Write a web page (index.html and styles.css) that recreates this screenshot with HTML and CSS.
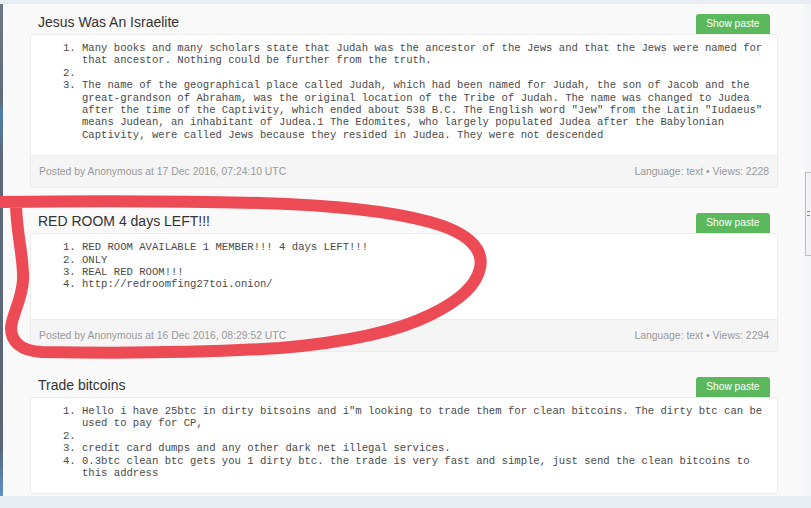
FILE: index.html
```html
<!DOCTYPE html>
<html lang="en">
<head>
<meta charset="utf-8">
<title>Pastes</title>
<link rel="stylesheet" href="styles.css">
</head>
<body>
<div class="frame">
  <div class="edge"></div>
  <main class="panel">
    <section class="paste">
      <div class="paste-head">
        <h2 class="paste-title">Jesus Was An Israelite</h2>
        <a class="btn" href="#">Show paste</a>
      </div>
      <div class="paste-card">
        <div class="paste-body">
          <ol>
            <li>Many books and many scholars state that Judah was the ancestor of the Jews and that the Jews were named for<br>that ancestor. Nothing could be further from the truth.</li>
            <li></li>
            <li>The name of the geographical place called Judah, which had been named for Judah, the son of Jacob and the<br>great-grandson of Abraham, was the original location of the Tribe of Judah. The name was changed to Judea<br>after the time of the Captivity, which ended about 538 B.C. The English word "Jew" from the Latin "Iudaeus"<br>means Judean, an inhabitant of Judea.1 The Edomites, who largely populated Judea after the Babylonian<br>Captivity, were called Jews because they resided in Judea. They were not descended</li>
          </ol>
        </div>
        <div class="paste-foot">
          <span>Posted by Anonymous at 17 Dec 2016, 07:24:10 UTC</span>
          <span>Language: text • Views: 2228</span>
        </div>
      </div>
    </section>

    <section class="paste">
      <div class="paste-head">
        <h2 class="paste-title">RED ROOM 4 days LEFT!!!</h2>
        <a class="btn" href="#">Show paste</a>
      </div>
      <div class="paste-card">
        <div class="paste-body paste-body--extra">
          <ol>
            <li>RED ROOM AVAILABLE 1 MEMBER!!! 4 days LEFT!!!</li>
            <li>ONLY</li>
            <li>REAL RED ROOM!!!</li>
            <li>http://redroomfing27toi.onion/</li>
          </ol>
        </div>
        <div class="paste-foot">
          <span>Posted by Anonymous at 16 Dec 2016, 08:29:52 UTC</span>
          <span>Language: text • Views: 2294</span>
        </div>
      </div>
    </section>

    <section class="paste">
      <div class="paste-head">
        <h2 class="paste-title">Trade bitcoins</h2>
        <a class="btn" href="#">Show paste</a>
      </div>
      <div class="paste-card">
        <div class="paste-body">
          <ol>
            <li>Hello i have 25btc in dirty bitsoins and i"m looking to trade them for clean bitcoins. The dirty btc can be<br>used to pay for CP,</li>
            <li></li>
            <li>credit card dumps and any other dark net illegal services.</li>
            <li>0.3btc clean btc gets you 1 dirty btc. the trade is very fast and simple, just send the clean bitcoins to<br>this address</li>
          </ol>
        </div>
      </div>
    </section>
  </main>
  <div class="gutter">
    <div class="thumb"><span class="grip"></span></div>
  </div>
</div>

<svg class="scribble" width="811" height="508" viewBox="0 0 811 508" aria-hidden="true">
  <path d="M -4 202 C 80 201 180 201 260 203 C 330 205 390 211 430 222 C 470 233 484 250 480 268 C 476 288 455 303 430 315 C 400 330 350 342 280 348 C 200 353 100 353 42 352 C 20 351 11 341 11 328 C 12 314 22 300 23 280 C 24 258 16 232 16 203" />
</svg>
</body>
</html>
```
FILE: styles.css
```css
* {
  box-sizing: border-box;
}

html, body {
  margin: 0;
  height: 508px;
  overflow: hidden;
}

body {
  background: #e8edf3;
  padding-top: 4px;
  font-family: "Liberation Sans", Arial, sans-serif;
  position: relative;
}

.frame {
  display: flex;
  height: 492px;
  overflow: hidden;
}

.edge {
  flex: none;
  width: 3px;
  background: linear-gradient(#6e7888 0%, #5f6b7c 20%, #4f7fb0 22%, #5d6a7b 30%, #5a6677 90%, #5d8fc6 100%);
}

.panel {
  flex: none;
  width: 801px;
  background: #f9f9f9;
  padding: 10px 26px 0 27px;
}

.gutter {
  flex: 1;
  background: #f3f5f8;
  padding-top: 168px;
}

.thumb {
  position: relative;
  margin-left: 1px;
  height: 84px;
  border: 1px solid #bdbdbd;
  border-right: none;
  background: #f2f2f2;
}

.grip {
  position: absolute;
  left: 1px;
  top: 38px;
  width: 3px;
  height: 5px;
  border-top: 1px solid #8a8a8a;
  border-bottom: 1px solid #8a8a8a;
}

.paste {
  margin-bottom: 25px;
}

.paste-head {
  display: flex;
  justify-content: space-between;
  align-items: flex-end;
  padding: 0 8px;
}

.paste-title {
  margin: 0 0 4px;
  font-size: 14px;
  line-height: 16px;
  font-weight: normal;
  color: #333;
}

.btn {
  display: block;
  height: 20px;
  line-height: 20px;
  padding: 0 10.5px;
  background: #5cb85c;
  color: #fff;
  font-size: 10.2px;
  text-decoration: none;
  border-radius: 3px 3px 0 0;
}

.paste-card {
  background: #fff;
  border: 1px solid #ececec;
  border-radius: 3px;
  overflow: hidden;
}

.paste-body ol {
  margin: 0;
  padding: 7px 8px 14px 51px;
  font-family: "Liberation Mono", "Courier New", monospace;
  font-size: 10.6px;
  line-height: 12.4px;
  color: #4a4a4a;
}

.paste-body li {
  min-height: 12.4px;
}

.paste-body--extra ol {
  padding-bottom: 28px;
}

.paste-foot {
  display: flex;
  justify-content: space-between;
  align-items: center;
  height: 32px;
  padding: 0 8px;
  background: #f5f5f5;
  border-top: 1px solid #ebebeb;
  font-size: 10.4px;
  color: #999;
}

.scribble {
  position: absolute;
  left: 0;
  top: 0;
  pointer-events: none;
}

.scribble path {
  fill: none;
  stroke: #ec4b56;
  stroke-width: 12;
  stroke-linecap: round;
  stroke-linejoin: round;
}
```
